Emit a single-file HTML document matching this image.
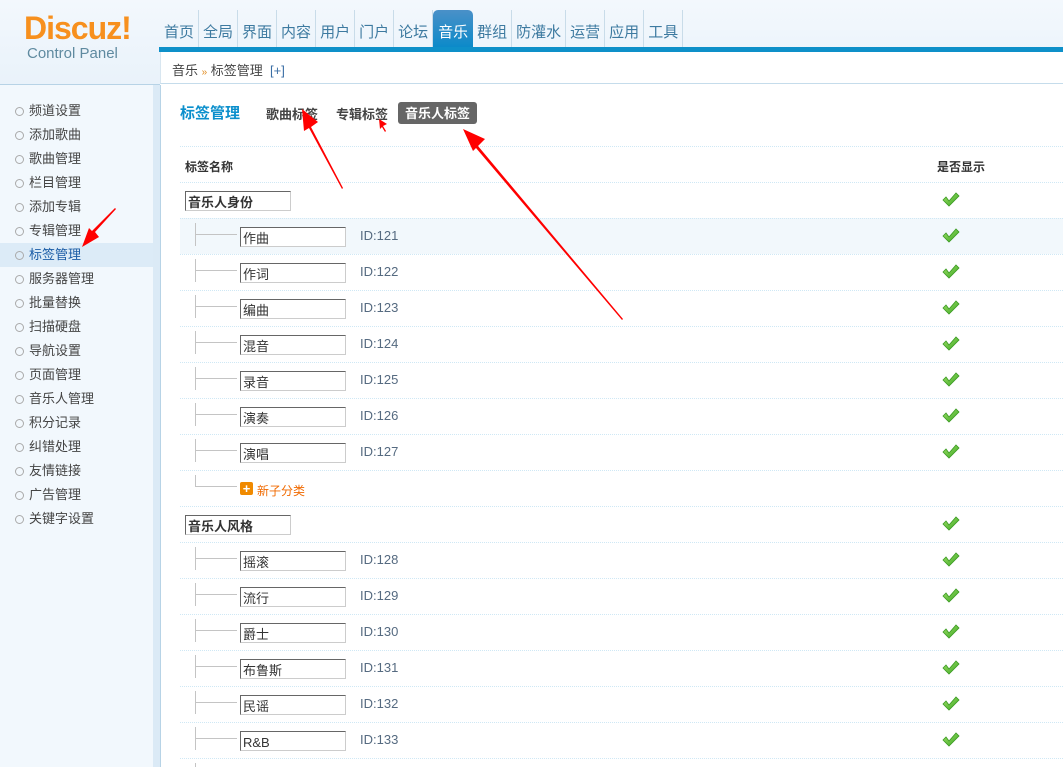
<!DOCTYPE html>
<html><head><meta charset="utf-8"><style>
*{margin:0;padding:0;box-sizing:border-box}
html,body{width:1063px;height:767px;overflow:hidden}
body{position:relative;background:#fff;font-family:"Liberation Sans","Noto Sans CJK SC",sans-serif;font-size:12px;color:#333}
#top{position:absolute;left:0;top:0;width:1063px;height:84px;background:linear-gradient(#f3f8fd,#e9f2fa)}
#logo{position:absolute;left:24px;top:10px;font:bold 32px "Liberation Sans",sans-serif;color:#f7901e;letter-spacing:-1px}
#cp{position:absolute;left:27px;top:45px;font-size:15px;color:#5f8aa0}
#nav{position:absolute;left:160px;top:10px;height:38px;display:flex}
#nav span{display:block;font-size:15px;color:#3d7aa0;padding:11px 4px 0;border-right:1px solid #c9dce9;height:38px}
#nav span.on{background:linear-gradient(#4a90c8,#0a8ac9);color:#fff;border-radius:5px 5px 0 0;padding:11px 5px 0;border:none}
#bar{position:absolute;left:159px;top:47px;right:0;height:5px;background:#0e90c9}
#crumb{position:absolute;left:160px;top:52px;right:0;height:32px;background:#fff;border-left:1px solid #d8e6f0;border-bottom:1px solid #c5dceb;font-size:13px;padding:8px 0 0 11px;color:#444}
#crumb b{color:#e08a1e;font-weight:normal;font-size:10px}
#crumb i{font-style:normal;color:#3a6ea5}
#side{position:absolute;left:0;top:84px;width:160px;height:683px;background:#f2f8fd;border-top:1px solid #b7d3e6}
#side:after{content:"";position:absolute;left:153px;top:0;width:7px;height:100%;background:#dbeaf6;border-right:1px solid #b7d3e6}
#side ul{list-style:none;margin-top:14px}
#side li{height:24px;line-height:24px;padding-left:29px;font-size:13px;color:#444;position:relative;width:153px}
#side li:before{content:"";position:absolute;left:15px;top:8px;width:7px;height:7px;border:1px solid #aaa;border-radius:50%}
#side li.on{background:#dcebf7;color:#1a5ca6}
#tabs{position:absolute;left:180px;top:102px}
.t1{position:absolute;left:0;top:0;font-size:15px;color:#0b8fcc;font-weight:bold;white-space:nowrap}
.tb{position:absolute;top:2px;font-size:13px;font-weight:bold;color:#444;white-space:nowrap}
.ta{position:absolute;left:218px;top:0px;background:#666;color:#fff;font-size:13px;font-weight:bold;padding:1px 7px 2px;border-radius:3px;white-space:nowrap}
.row{position:absolute;left:180px;width:883px;height:36px;border-top:1px dotted #cfe8f5}
.row.h{background:#f2f8fc}
.hd{font-weight:bold;font-size:12px;color:#333}
.inp{position:absolute;top:8px;height:20px;border:1px solid #666;border-right-color:#ccc;border-bottom-color:#ccc;background:#fff;font-size:13px;padding:2px 2px 0;line-height:17px}
.tv{position:absolute;left:15px;top:4px;width:1px;height:23px;background:#c4c4c4}
.th{position:absolute;left:16px;top:15px;width:41px;height:1px;background:#c4c4c4}
.id{position:absolute;left:180px;top:9px;font-size:13px;color:#556a80}
.ck{position:absolute;left:762px;top:9px}
</style></head><body>
<div id="top"><div id="logo">Discuz!</div><div id="cp">Control Panel</div>
<div id="nav"><span>首页</span><span>全局</span><span>界面</span><span>内容</span><span>用户</span><span>门户</span><span>论坛</span><span class="on">音乐</span><span>群组</span><span>防灌水</span><span>运营</span><span>应用</span><span>工具</span></div>
<div id="bar"></div>
<div id="crumb">音乐 <b>»</b> 标签管理 &nbsp;<i>[+]</i></div></div>
<div id="side"><ul>
<li>频道设置</li><li>添加歌曲</li><li>歌曲管理</li><li>栏目管理</li><li>添加专辑</li><li>专辑管理</li><li class="on">标签管理</li><li>服务器管理</li><li>批量替换</li><li>扫描硬盘</li><li>导航设置</li><li>页面管理</li><li>音乐人管理</li><li>积分记录</li><li>纠错处理</li><li>友情链接</li><li>广告管理</li><li>关键字设置</li></ul></div>
<div id="tabs"><span class="t1">标签管理</span><span class="tb" style="left:86px">歌曲标签</span><span class="tb" style="left:156px">专辑标签</span><span class="ta">音乐人标签</span></div>
<div class="row" style="top:146px"><span class="hd" style="position:absolute;left:5px;top:11px">标签名称</span><span class="hd" style="position:absolute;left:757px;top:11px">是否显示</span></div>
<div id="rows"></div>
<svg width="1063" height="767" style="position:absolute;left:0;top:0" id="ov">
<g fill="#f00">
<polygon points="343,188 311,127 318,122 302,109 304,131 309,128 342,189"/>
<polygon points="386,131 383,126 387,124 379,119 380,129 382,127 385,132"/>
<polygon points="623,319 478,146 485,139 463,129 473,151 476,148 622,320"/>
<polygon points="116,209 95,232 99,237 82,247 89,228 92,231 115,208"/>
</g></svg>
<script>
var rows=document.getElementById('rows'),h='';
var chk='<svg class="ck" width="18" height="16" viewBox="0 0 18 16"><defs><linearGradient id="g" x1="0" y1="0" x2="1" y2="1"><stop offset="0" stop-color="#9fe067"/><stop offset="1" stop-color="#3aa622"/></linearGradient></defs><path d="M1 8 L4 5 L7 9 L14 1 L17 4 L7 14 Z" fill="url(#g)" stroke="#3a9a22" stroke-width="0.8"/></svg>';
function cat(y,t){h+='<div class="row" style="top:'+y+'px"><div class="inp" style="left:5px;width:106px;font-weight:bold">'+t+'</div>'+chk+'</div>';}
function item(y,t,id,hl){h+='<div class="row'+(hl?' h':'')+'" style="top:'+y+'px"><div class="tv"></div><div class="th"></div><div class="inp" style="left:60px;width:106px">'+t+'</div><span class="id">ID:'+id+'</span>'+chk+'</div>';}
cat(182,'音乐人身份');
var a=['作曲','作词','编曲','混音','录音','演奏','演唱'];
for(var i=0;i<7;i++)item(218+36*i,a[i],121+i,i==0);
h+='<div class="row" style="top:470px"><div class="tv" style="height:12px"></div><div class="th"></div><span style="position:absolute;left:60px;top:11px;width:13px;height:13px;background:#f08a00;border-radius:2px;color:#fff;font:bold 13px/13px Liberation Sans;text-align:center">+</span><span style="position:absolute;left:77px;top:11px;color:#f06a00;font-size:12px">新子分类</span></div>';
cat(506,'音乐人风格');
var b=['摇滚','流行','爵士','布鲁斯','民谣','R&amp;B',''];
for(var i=0;i<7;i++)item(542+36*i,b[i],128+i,false);
rows.innerHTML=h;
</script>
</body></html>
